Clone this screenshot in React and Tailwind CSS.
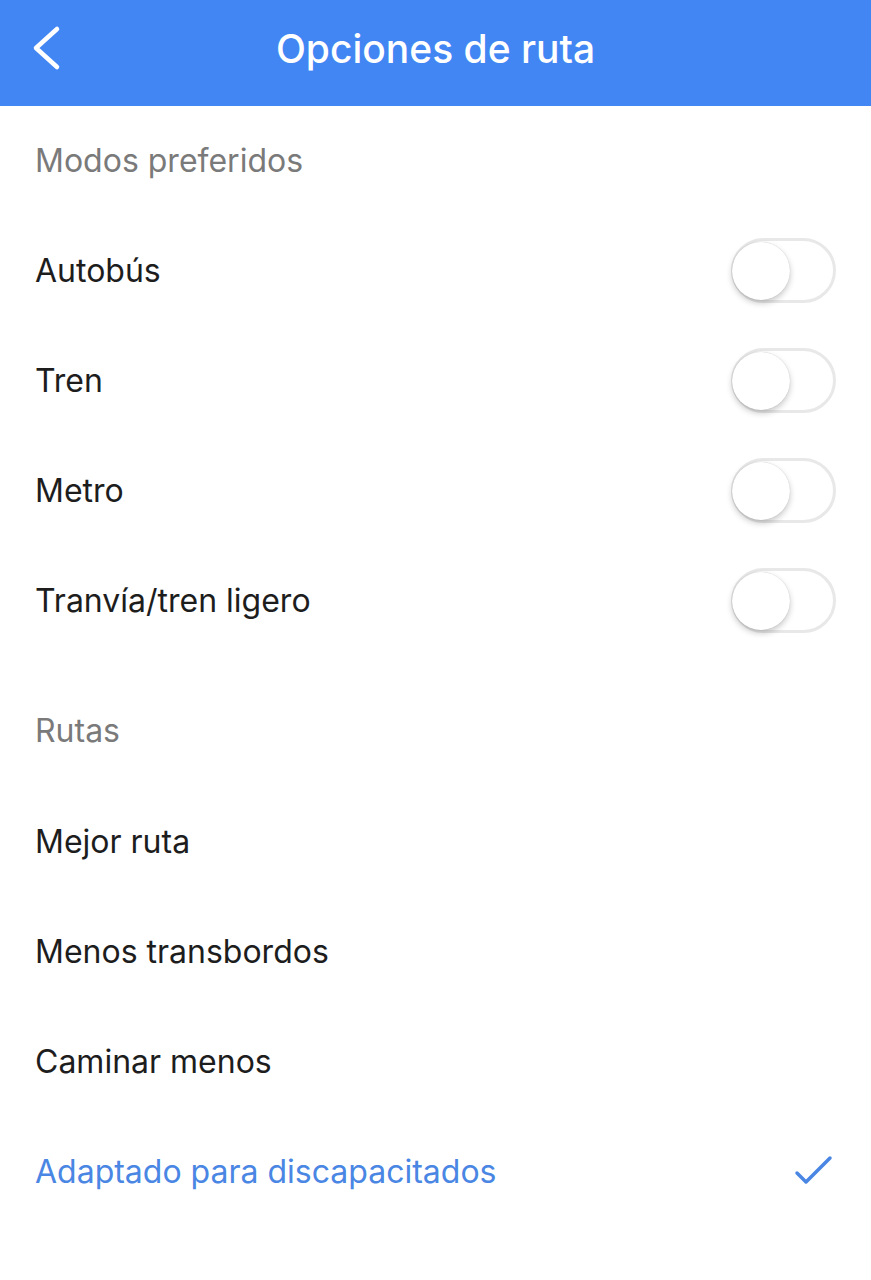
import React from "react";

function Toggle() {
  return (
    <div className="relative w-[105px] h-[65px] rounded-full border-[3px] border-[#e8e8e8] bg-white -mt-[2px]">
      <div className="absolute left-[-2px] top-[1px] w-[58px] h-[58px] rounded-full bg-white shadow-[0_3px_6px_rgba(0,0,0,0.22),0_0_1px_rgba(0,0,0,0.2)]" />
    </div>
  );
}

const font = { fontFamily: "Inter, 'Noto Sans', sans-serif" };

export default function App() {
  const modes = ["Autobús", "Tren", "Metro", "Tranvía/tren ligero"];
  const routes = ["Mejor ruta", "Menos transbordos", "Caminar menos"];
  return (
    <div className="w-[871px] h-[1280px] bg-white" style={font}>
      <header className="relative h-[106px] bg-[#4286f4] flex items-center justify-center">
        <svg className="absolute left-[30px] top-[24px]" width="34" height="48" viewBox="0 0 34 48">
          <path d="M27 5 L6 24 L27 43" fill="none" stroke="white" strokeWidth="4.5" strokeLinecap="round" strokeLinejoin="round" />
        </svg>
        <h1 className="text-white text-[39px] font-medium leading-none mb-[10px]">Opciones de ruta</h1>
      </header>
      <div className="px-[35px]">
        <div className="h-[110px] flex items-center text-[#7a7a7a] text-[32px] leading-none">Modos preferidos</div>
        {modes.map((m) => (
          <div key={m} className="h-[110px] flex items-center justify-between">
            <span className="text-[#1d1d1d] text-[32px] leading-none">{m}</span>
            <Toggle />
          </div>
        ))}
        <div className="h-[131px] flex items-end pb-[40px] text-[#7a7a7a] text-[32px] leading-none">Rutas</div>
        {routes.map((r) => (
          <div key={r} className="h-[110px] flex items-center text-[#1d1d1d] text-[32px] leading-none">{r}</div>
        ))}
        <div className="h-[110px] flex items-center justify-between">
          <span className="text-[#4a86e3] text-[32px] leading-none">Adaptado para discapacitados</span>
          <svg width="40" height="34" viewBox="0 0 40 34" className="mr-[2px]">
            <path d="M3 18 L12 27 L36 3" fill="none" stroke="#4a86e3" strokeWidth="3.5" strokeLinecap="round" strokeLinejoin="round" />
          </svg>
        </div>
      </div>
    </div>
  );
}
